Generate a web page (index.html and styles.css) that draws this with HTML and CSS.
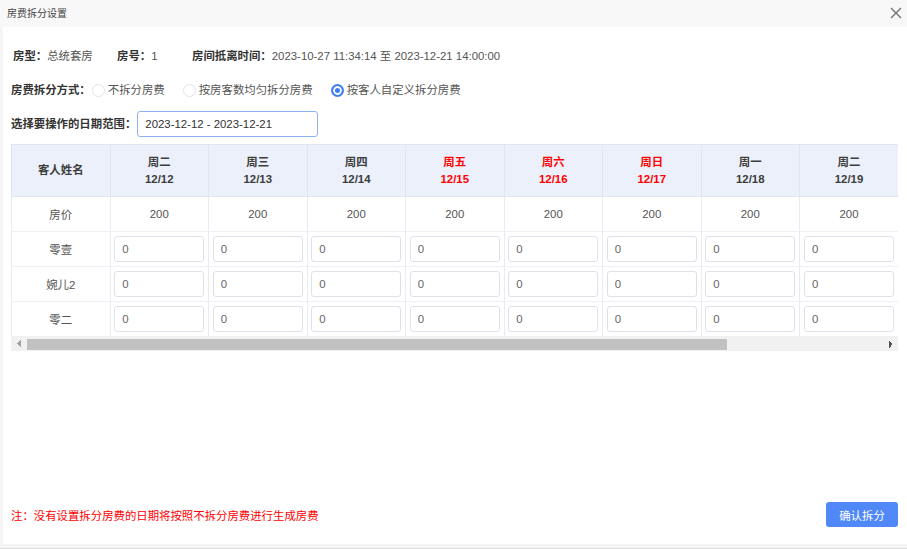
FILE: index.html
```html
<!DOCTYPE html>
<html lang="zh-CN">
<head>
    <meta charset="UTF-8">
    <meta name="viewport" content="width=device-width, initial-scale=1.0">
    <title>房费拆分设置</title>
    <link rel="stylesheet" href="styles.css">
</head>
<body>

<div class="dialog">
    <div class="dialog-title">
        <span>房费拆分设置</span>
        <span class="close-btn">
            <svg width="12" height="12" viewBox="0 0 12 12"><path d="M1 1L11 11M11 1L1 11" stroke="#707070" stroke-width="1.4" fill="none"/></svg>
        </span>
    </div>

    <div class="dialog-body">
        <div class="info-row">
            <div class="info-item item-type"><b>房型：</b>总统套房</div>
            <div class="info-item item-no"><b>房号：</b>1</div>
            <div class="info-item"><b>房间抵离时间：</b>2023-10-27 11:34:14 至 2023-12-21 14:00:00</div>
        </div>

        <div class="form-row">
            <b>房费拆分方式：</b>
            <label class="radio-item"><span class="radio"></span>不拆分房费</label>
            <label class="radio-item"><span class="radio"></span>按房客数均匀拆分房费</label>
            <label class="radio-item"><span class="radio checked"></span>按客人自定义拆分房费</label>
        </div>

        <div class="form-row">
            <b>选择要操作的日期范围：</b>
            <input class="date-range" type="text" value="2023-12-12 - 2023-12-21">
        </div>

        <div class="table-wrap">
            <table id="splitTable">
                <thead>
                    <tr>
                        <th>客人姓名</th>
                        <th>周二<br>12/12</th>
                        <th>周三<br>12/13</th>
                        <th>周四<br>12/14</th>
                        <th class="weekend">周五<br>12/15</th>
                        <th class="weekend">周六<br>12/16</th>
                        <th class="weekend">周日<br>12/17</th>
                        <th>周一<br>12/18</th>
                        <th>周二<br>12/19</th>
                    </tr>
                </thead>
                <tbody>
                    <tr>
                        <td>房价</td>
                        <td>200</td><td>200</td><td>200</td><td>200</td>
                        <td>200</td><td>200</td><td>200</td><td>200</td>
                    </tr>
                    <tr>
                        <td>零壹</td>
                        <td><input class="fee-input" value="0"></td>
                        <td><input class="fee-input" value="0"></td>
                        <td><input class="fee-input" value="0"></td>
                        <td><input class="fee-input" value="0"></td>
                        <td><input class="fee-input" value="0"></td>
                        <td><input class="fee-input" value="0"></td>
                        <td><input class="fee-input" value="0"></td>
                        <td><input class="fee-input" value="0"></td>
                    </tr>
                    <tr>
                        <td>婉儿2</td>
                        <td><input class="fee-input" value="0"></td>
                        <td><input class="fee-input" value="0"></td>
                        <td><input class="fee-input" value="0"></td>
                        <td><input class="fee-input" value="0"></td>
                        <td><input class="fee-input" value="0"></td>
                        <td><input class="fee-input" value="0"></td>
                        <td><input class="fee-input" value="0"></td>
                        <td><input class="fee-input" value="0"></td>
                    </tr>
                    <tr>
                        <td>零二</td>
                        <td><input class="fee-input" value="0"></td>
                        <td><input class="fee-input" value="0"></td>
                        <td><input class="fee-input" value="0"></td>
                        <td><input class="fee-input" value="0"></td>
                        <td><input class="fee-input" value="0"></td>
                        <td><input class="fee-input" value="0"></td>
                        <td><input class="fee-input" value="0"></td>
                        <td><input class="fee-input" value="0"></td>
                    </tr>
                </tbody>
            </table>
            <!-- horizontal scrollbar -->
            <div class="hscroll">
                <span class="hscroll-btn btn-left"></span>
                <div class="hscroll-track"><div class="hscroll-thumb"></div></div>
                <span class="hscroll-btn btn-right"></span>
            </div>
        </div>

        <div class="dialog-footer">
            <span class="note">注：没有设置拆分房费的日期将按照不拆分房费进行生成房费</span>
            <button class="btn-primary">确认拆分</button>
        </div>
    </div>
    <div class="dialog-bottom"></div>
</div>

</body>
</html>
```

FILE: styles.css
```css
body {
    margin: 0;
    font-family: "Liberation Sans", "Noto Sans CJK SC", sans-serif;
    font-size: 11.4px;
    color: #555;
    background: #fff;
}
.dialog {
    height: 549px;
    display: flex;
    flex-direction: column;
    background: #f5f5f5;
}
.dialog-title {
    height: 27px;
    flex-shrink: 0;
    display: flex;
    align-items: center;
    justify-content: space-between;
    padding: 0 5px 2px 7px;
    box-sizing: border-box;
    background: #f8f8f8;
    font-size: 10px;
    color: #444;
}
.close-btn {
    display: flex;
    margin-top: 1px;
}
.dialog-body {
    flex: 1;
    display: flex;
    flex-direction: column;
    margin-left: 3px;
    padding: 0 9px 0 8px;
    background: #fff;
}
.dialog-bottom {
    height: 5px;
    flex-shrink: 0;
    border-bottom: 1px solid #dcdcdc;
    box-sizing: border-box;
    background: #f5f5f5;
}
b {
    color: #333;
}
.info-row {
    display: flex;
    margin-top: 19px;
    padding-left: 2px;
    line-height: 20px;
}
.item-type {
    width: 104px;
}
.item-no {
    width: 75px;
}
.form-row {
    display: flex;
    align-items: center;
    margin-top: 14px;
    line-height: 20px;
}
.form-row + .form-row {
    margin-top: 11px;
}
.radio-item {
    display: flex;
    align-items: center;
    margin-right: 17px;
}
.radio {
    width: 13px;
    height: 13px;
    box-sizing: border-box;
    border: 1px solid #dfe2e8;
    border-radius: 50%;
    margin: 0 3px 0 1px;
    background: #fff;
}
.radio.checked {
    border: 2px solid #3f7ff5;
    box-shadow: inset 0 0 0 2px #fff;
    background: #3f7ff5;
}
.date-range {
    width: 181px;
    height: 26px;
    box-sizing: border-box;
    margin-left: 1px;
    padding: 0 7px;
    border: 1px solid #8db2f4;
    border-radius: 3px;
    font-family: inherit;
    font-size: 11.4px;
    color: #333;
    outline: none;
}
.table-wrap {
    width: 887px;
    margin-top: 7px;
    overflow: hidden;
}
table {
    width: 100%;
    table-layout: fixed;
    border-collapse: collapse;
    text-align: center;
}
th, td {
    padding: 0;
    border: 1px solid #e5e9f1;
}
th {
    height: 51px;
    background-color: #ebf0fa;
    line-height: 17px;
    color: #3d3d3d;
    font-weight: bold;
    border-color: #e0e5f0;
}
th.weekend {
    color: #ff0000;
}
td {
    height: 34px;
    color: #555;
    border-color: #eef0f5 #e8ebf2;
}
th:last-child, td:last-child {
    border-right: none;
}
.fee-input {
    display: block;
    width: 90px;
    height: 26px;
    box-sizing: border-box;
    margin: 0 auto;
    padding: 0 7px;
    border: 1px solid #dde1e9;
    border-radius: 3px;
    font-family: inherit;
    font-size: 11.4px;
    color: #666;
    outline: none;
}
.hscroll {
    display: flex;
    height: 14px;
    background: #f1f1f1;
}
.hscroll-btn {
    width: 16px;
    flex-shrink: 0;
}
.btn-left {
    background:
        linear-gradient(to bottom right, transparent 50%, #a3a3a3 50%) 6px 3px / 4px 4px no-repeat,
        linear-gradient(to top right, transparent 50%, #a3a3a3 50%) 6px 7px / 4px 4px no-repeat;
}
.btn-right {
    background:
        linear-gradient(to bottom left, transparent 50%, #505050 50%) 7px 3px / 4px 4px no-repeat,
        linear-gradient(to top left, transparent 50%, #505050 50%) 7px 7px / 4px 4px no-repeat;
}
.hscroll-track {
    flex: 1;
    padding: 2px 0 1px;
}
.hscroll-thumb {
    width: 700px;
    height: 100%;
    background: #c1c1c1;
}
.dialog-footer {
    display: flex;
    align-items: center;
    justify-content: space-between;
    margin-top: auto;
    padding-bottom: 17px;
}
.note {
    color: #ff0000;
}
.btn-primary {
    width: 72px;
    height: 25px;
    border: none;
    border-radius: 3px;
    background: #5088f8;
    color: #fff;
    font-family: inherit;
    font-size: 11.4px;
}
```
